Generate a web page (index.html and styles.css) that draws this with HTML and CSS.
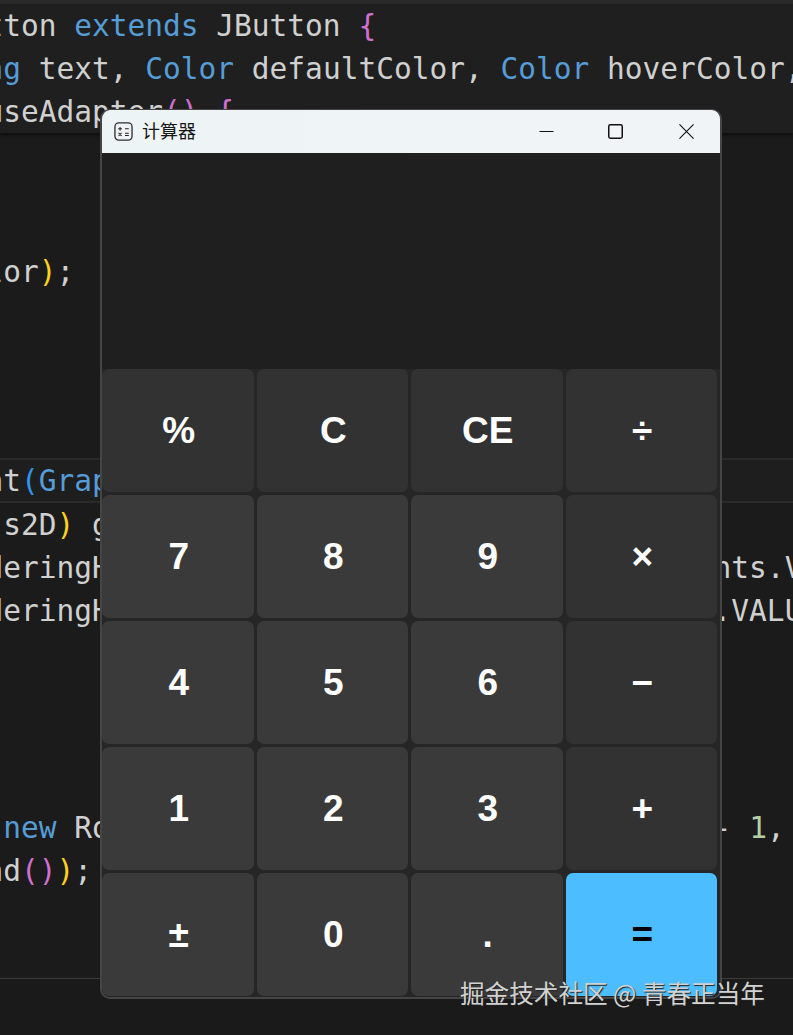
FILE: index.html
```html
<!DOCTYPE html>
<html lang="zh">
<head>
<meta charset="utf-8">
<title>计算器</title>
<link rel="stylesheet" href="styles.css">
</head>
<body>
<div class="desktop">
  <div class="editor">
    <div class="sticky">
      <div class="line">tton <span class="kw">extends</span> JButton <span class="pink">{</span></div>
      <div class="line"><span class="kw">ng</span> text, <span class="kw">Color</span> defaultColor, <span class="kw">Color</span> hoverColor,</div>
      <div class="line">useAdapter<span class="pink">()</span> <span class="pink">{</span></div>
    </div>
    <div class="pane pane-top">
      <div class="line">lor<span class="gold">)</span>;</div>
    </div>
    <div class="band">
      <div class="line">nt<span class="sky">(</span><span class="kw">Graphics</span> g<span class="sky">)</span></div>
    </div>
    <div class="pane pane-mid">
      <div class="line"> s2D<span class="gold">)</span> g;</div>
      <div class="line">deringHint(RenderingHints.KEY,RenderingHints.V</div>
      <div class="line">deringHint(RenderingHints.KEY_RENDER, Key.VALU</div>
    </div>
    <div class="pane pane-low">
      <div class="line"> <span class="kw">new</span> RoundRectangle2D.Float(0, 0, getW() - <span class="num">1</span>,</div>
      <div class="line">nd<span class="pink">()</span><span class="gold">)</span>;</div>
    </div>
    <div class="foot"></div>
  </div>

  <div class="window">
    <div class="titlebar">
      <svg class="app-icon" viewBox="0 0 20 20" aria-hidden="true">
        <rect x="1" y="1" width="18" height="18" rx="4" fill="#f0f3f4" stroke="#2e2e2e" stroke-width="1.4"/>
        <path d="M4.4 7.2h4M6.4 5.2v4M11.6 7.2h4M4.8 11.4l3.2 3.2M8 11.4l-3.2 3.2M11.6 11.9h4M11.6 14.2h4" fill="none" stroke="#222" stroke-width="1.1"/>
      </svg>
      <span class="title">计算器</span>
      <div class="controls">
        <svg class="ctl" viewBox="0 0 16 16" aria-hidden="true"><path d="M0.5 8h15" fill="none" stroke="#111" stroke-width="1.2"/></svg>
        <svg class="ctl" viewBox="0 0 16 16" aria-hidden="true"><rect x="0.8" y="0.8" width="14.4" height="14.4" rx="1.8" fill="none" stroke="#111" stroke-width="1.6"/></svg>
        <svg class="ctl ctl-close" viewBox="0 0 16 16" aria-hidden="true"><path d="M0.5 0.5l15 15M15.5 0.5l-15 15" fill="none" stroke="#111" stroke-width="1.2"/></svg>
      </div>
    </div>
    <div class="display"></div>
    <div class="keys">
      <button class="key top">%</button>
      <button class="key top">C</button>
      <button class="key top">CE</button>
      <button class="key op">÷</button>
      <button class="key">7</button>
      <button class="key">8</button>
      <button class="key">9</button>
      <button class="key op">×</button>
      <button class="key">4</button>
      <button class="key">5</button>
      <button class="key">6</button>
      <button class="key op">−</button>
      <button class="key">1</button>
      <button class="key">2</button>
      <button class="key">3</button>
      <button class="key op">+</button>
      <button class="key">±</button>
      <button class="key">0</button>
      <button class="key">.</button>
      <button class="key equals">=</button>
    </div>
  </div>

  <div class="watermark">掘金技术社区 @ 青春正当年</div>
</div>
</body>
</html>
```

FILE: styles.css
```css
* { box-sizing: border-box; }
html, body { margin: 0; padding: 0; }
body { background: #1a1a1a; }

.desktop {
  position: relative;
  width: 793px;
  height: 1035px;
  overflow: hidden;
  background: #1b1b1b;
}

.editor {
  display: flex;
  flex-direction: column;
  height: 100%;
  border-top: 4px solid #2b2b2b;
  font-family: "DejaVu Sans Mono", monospace;
  font-size: 29.5px;
  color: #d0d0d0;
}

.line {
  height: 43px;
  line-height: 45px;
  margin-left: -14.6px;
  white-space: pre;
}

.sticky {
  background: #1f1f1f;
  box-shadow: 0 2px 3px #0e0e0e;
  position: relative;
}

.pane-top { padding-top: 117px; height: 325px; }
.band {
  height: 45px;
  background: #1e1e1e;
  border-top: 2px solid #2a2a2a;
  border-bottom: 2px solid #2a2a2a;
}
.band .line { height: 41px; line-height: 43px; }
.pane-mid { height: 303px; }
.pane-low { height: 172px; }
.foot { flex: 1; border-top: 1px solid #3c3c3c; background: #1a1a1a; }

.kw { color: #569cd6; }
.pink { color: #d16fd0; }
.gold { color: #ffd21f; }
.sky { color: #2e94f0; }
.num { color: #b5cea8; }

.window {
  position: absolute;
  left: 100px;
  top: 109px;
  width: 622px;
  height: 890px;
  display: flex;
  flex-direction: column;
  background: #262626;
  border: 2px solid #454545;
  border-top-width: 1px;
  border-radius: 10px;
  overflow: hidden;
}

.titlebar {
  display: flex;
  align-items: center;
  flex: 0 0 43px;
  padding-left: 12px;
  background: linear-gradient(90deg, #edf4f5, #f1f4f6);
}
.app-icon { width: 19px; height: 19px; }
.title {
  margin-left: 9px;
  margin-top: -4px;
  font-family: "Noto Sans CJK SC", sans-serif;
  font-size: 18px;
  color: #161616;
}
.controls {
  display: flex;
  gap: 54px;
  margin-left: auto;
  padding-right: 26px;
}
.ctl { width: 15px; height: 15px; display: block; }
.ctl-close { margin-left: 2px; }

.display { flex: 0 0 216px; background: #1f1f1f; }

.keys {
  display: grid;
  grid-template-columns: repeat(4, 151.5px);
  grid-template-rows: repeat(5, 123px);
  column-gap: 3px;
  row-gap: 3px;
  background: #262626;
  flex: 1;
}

.key {
  border: 0;
  padding: 0 0 0 2px;
  border-radius: 7px;
  background: #3a3a3a;
  color: #ffffff;
  font-family: "Liberation Sans", sans-serif;
  font-weight: 700;
  font-size: 37px;
}
.key.top, .key.op { background: #323232; }
.key.equals { background: #4cbeff; color: #000000; }

.watermark {
  position: absolute;
  left: 460px;
  top: 974px;
  font-family: "Noto Sans CJK SC", sans-serif;
  font-size: 24.6px;
  line-height: 36px;
  color: #d2d2d2;
  text-shadow: 1px 1px 1px #222;
  white-space: nowrap;
}
```
